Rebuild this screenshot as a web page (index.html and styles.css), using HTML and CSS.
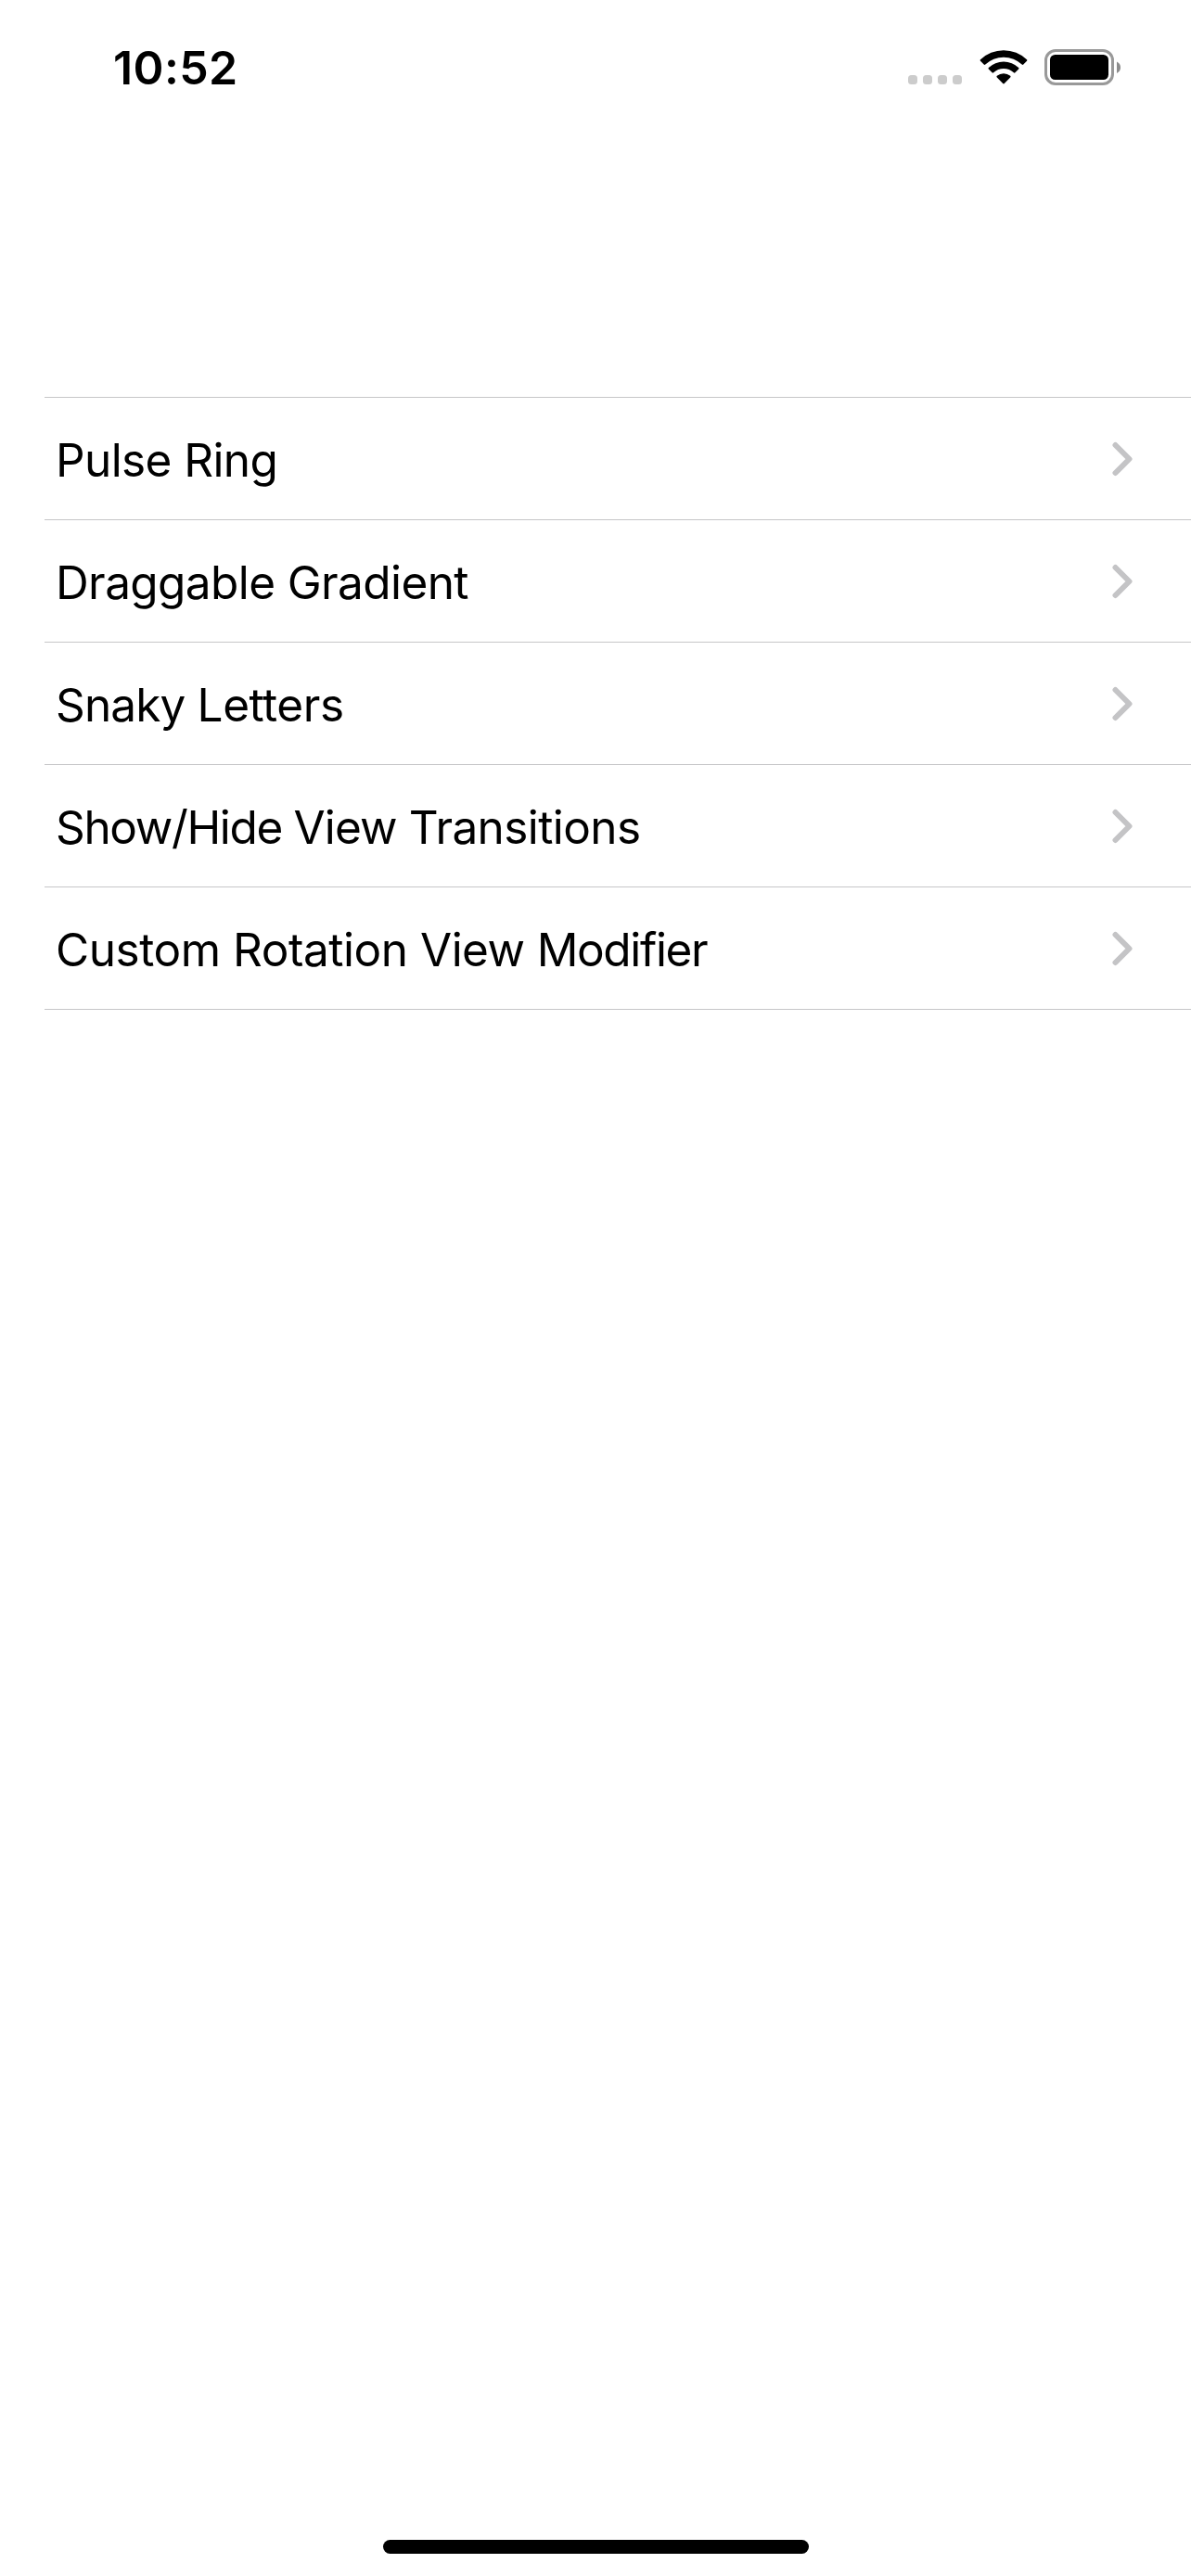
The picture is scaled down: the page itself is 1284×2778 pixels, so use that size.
FILE: index.html
```
<!DOCTYPE html>
<html lang="en">
<head>
<meta charset="utf-8">
<title>Animations</title>
<link rel="stylesheet" href="styles.css">
</head>
<body>
<div class="screen">
  <header class="status">
    <time class="clock">10:52</time>
    <div class="indicators">
      <div class="cellular"><i></i><i></i><i></i><i></i></div>
      <svg class="wifi" width="52" height="40" viewBox="0 0 52 40" aria-hidden="true">
        <path d="M1 11.3a36 36 0 0 1 50 0q.8.8 0 1.5l-3.7 3.8q-.8.7-1.6 0a28.5 28.5 0 0 0-39.4 0q-.8.7-1.6 0L1 12.8q-.8-.7 0-1.5z"/>
        <path d="M9.8 20.1a23.5 23.5 0 0 1 32.4 0q.7.7 0 1.4l-3.8 3.8q-.7.7-1.5 0a16 16 0 0 0-21.8 0q-.8.7-1.5 0l-3.8-3.8q-.7-.7 0-1.4z"/>
        <path d="M18.8 28.8a11.2 11.2 0 0 1 14.4 0q.8.8 0 1.6l-6.4 6.6q-.8.8-1.6 0l-6.4-6.6q-.8-.8 0-1.6z"/>
      </svg>
      <svg class="battery" width="84" height="40" viewBox="0 0 84 40" aria-hidden="true">
        <rect x="1.5" y="1.5" width="72" height="36" rx="10.5" fill="none" stroke="#999" stroke-width="3"/>
        <rect x="6" y="6" width="63" height="27" rx="5.5"/>
        <path d="M78 13.5q4 2 4 6.2t-4 6.3z" fill="#8c8c8c"/>
      </svg>
    </div>
  </header>
  <main class="list">
    <a class="row"><span class="label">Pulse Ring</span><svg class="chevron" viewBox="0 0 22 38"><path d="M3.5 4l15 15-15 15"/></svg></a>
    <a class="row"><span class="label">Draggable Gradient</span><svg class="chevron" viewBox="0 0 22 38"><path d="M3.5 4l15 15-15 15"/></svg></a>
    <a class="row"><span class="label"><span class="tight">Snaky </span><span class="loose">Letters</span></span><svg class="chevron" viewBox="0 0 22 38"><path d="M3.5 4l15 15-15 15"/></svg></a>
    <a class="row"><span class="label"><span class="tighter">Show/Hide </span><span class="tight">View </span>Transitions</span><svg class="chevron" viewBox="0 0 22 38"><path d="M3.5 4l15 15-15 15"/></svg></a>
    <a class="row"><span class="label"><span class="loose">Custom Rotation </span>View <span class="tighter">Modifier</span></span><svg class="chevron" viewBox="0 0 22 38"><path d="M3.5 4l15 15-15 15"/></svg></a>
  </main>
  <div class="home-bar"></div>
</div>
</body>
</html>
```
FILE: styles.css
```
* { box-sizing: border-box; }

body {
  margin: 0;
  background: #fff;
  color: #000;
  font-family: Inter, "Liberation Sans", sans-serif;
}

.screen {
  display: flex;
  flex-direction: column;
  width: 1284px;
  height: 2778px;
}

.status {
  display: flex;
  justify-content: space-between;
  height: 428px;
  padding: 53px 74px 0 122px;
}

.clock {
  height: 40px;
  font-size: 50px;
  font-weight: 600;
  line-height: 40px;
  letter-spacing: 0.4px;
}

.indicators {
  display: flex;
  height: 40px;
}

.cellular {
  display: flex;
  align-items: flex-end;
  gap: 6px;
  height: 38px;
  margin-right: 18.5px;
}

.cellular i {
  width: 10px;
  height: 10px;
  border-radius: 3.5px;
  background: #ccc;
}

.battery { margin-left: 18.5px; }

.list {
  margin-left: 48px;
  border-top: 1px solid #c6c6c8;
}

.row {
  display: flex;
  align-items: center;
  justify-content: space-between;
  height: 132px;
  padding: 0 63px 0 12px;
  border-bottom: 1px solid #c6c6c8;
}

.label {
  padding-top: 3px;
  font-size: 49.5px;
  line-height: 60px;
  letter-spacing: -0.6px;
  white-space: pre;
}

.loose { letter-spacing: -0.45px; }
.tight { letter-spacing: -0.85px; }
.tighter { letter-spacing: -1.35px; }

.chevron {
  width: 22px;
  height: 38px;
  fill: none;
  stroke: #c4c4c6;
  stroke-width: 6;
  stroke-linecap: round;
  stroke-linejoin: round;
}

.home-bar {
  width: 459px;
  height: 15px;
  margin: auto auto 24px 413px;
  border-radius: 8px;
  background: #000;
}
```
